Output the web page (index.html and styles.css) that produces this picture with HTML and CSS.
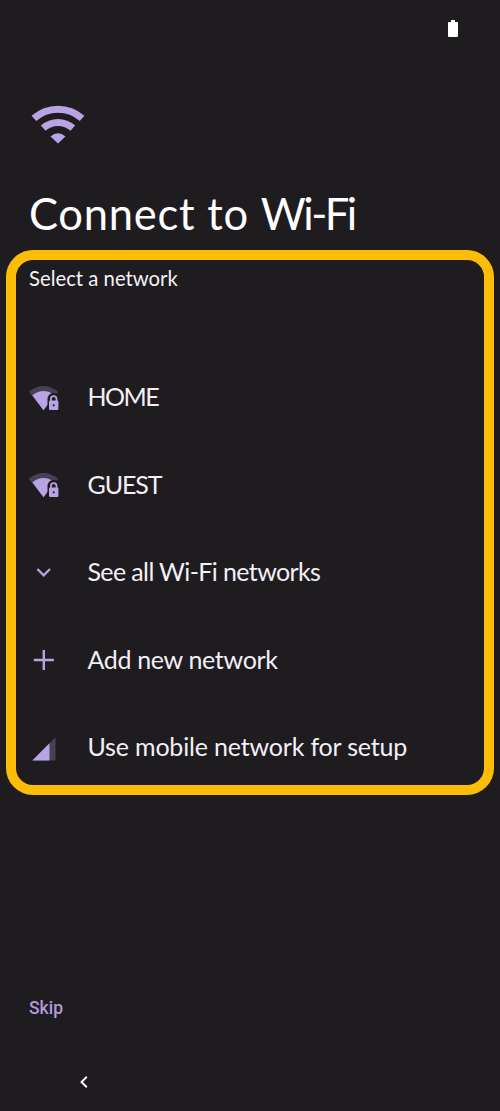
FILE: index.html
```html
<!DOCTYPE html>
<html lang="en">
<head>
<meta charset="utf-8">
<title>Connect to Wi-Fi</title>
<link rel="stylesheet" href="styles.css">
</head>
<body>
<main class="screen">
  <div class="status">
    <svg class="battery" viewBox="0 0 10 17"><path d="M3 0h4v2h2q1 0 1 1v13q0 1-1 1H1q-1 0-1-1V3q0-1 1-1h2z"/></svg>
  </div>
  <header class="header">
    <svg class="wifi" viewBox="0 0 54 40">
      <g fill="none" stroke="currentColor" stroke-width="7"><path d="M2.900 14.400a36 36 0 0 1 48.200 0"/><path d="M12.200 24.200a22 22 0 0 1 29.600 0"/></g>
      <path fill="currentColor" d="M19.500 32.400q7.500-6.400 15 0L27 39.500z"/>
    </svg>
    <h1 class="title">Connect to <span class="wide-glyphs">Wi-Fi</span></h1>
  </header>
  <section class="panel">
    <h2 class="subtitle">Select a network</h2>
    <ul class="networks">
      <li class="row">
        <svg class="icon" viewBox="0 0 32 28"><use href="#secured"/></svg>
        <span class="label home">HOME</span>
      </li>
      <li class="row">
        <svg class="icon" viewBox="0 0 32 28">
          <g id="secured">
            <path fill="#484056" d="M.8 7.800Q15.500-3.600 30.200 7.800L15.500 26.300z"/>
            <path fill="#b8a4e3" d="M4.300 11.300Q15.500 2.500 26.700 11.300L15.500 26.300z"/>
            <path fill="#1f1c20" d="M19.500 14q1.500-5 6-5t6 5v14h-12z"/>
            <rect x="21" y="16.600" width="9.400" height="9.400" rx="1.200" fill="#b8a4e3"/>
            <path d="M22.900 17v-2a2.800 2.800 0 0 1 5.600 0v2" fill="none" stroke="#b8a4e3" stroke-width="1.700"/>
            <circle cx="25.700" cy="21.300" r="1.100" fill="#1f1c20"/>
          </g>
        </svg>
        <span class="label guest">GUEST</span>
      </li>
      <li class="row">
        <svg class="icon" viewBox="0 0 32 28"><path d="M9.400 10l6.300 6.300L22 10" fill="none" stroke="currentColor" stroke-width="2.300"/></svg>
        <span class="label see">See all Wi-Fi networks</span>
      </li>
      <li class="row">
        <svg class="icon" viewBox="0 0 32 28"><path d="M5.800 14h20M15.800 4v20" fill="none" stroke="currentColor" stroke-width="2.400"/></svg>
        <span class="label add">Add new network</span>
      </li>
      <li class="row">
        <svg class="icon" viewBox="0 0 32 28"><path fill="#484056" d="M4.300 26.500L27.500 3.300v23.200z"/><path fill="#b8a4e3" d="M4.300 26.500L21.500 9.300v17.200z"/></svg>
        <span class="label mobile">Use mobile network for setup</span>
      </li>
    </ul>
  </section>
  <footer class="footer">
    <span class="skip">Skip</span>
    <svg class="back" viewBox="0 0 8 12"><path d="M6.800 .8L1.500 6l5.300 5.200" fill="none" stroke="#fff" stroke-width="1.900"/></svg>
  </footer>
</main>
</body>
</html>
```
FILE: styles.css
```css
* { box-sizing: border-box; }
body { margin: 0; background: #1f1c20; font-family: Lato, "Open Sans", sans-serif; color: #f5f2f6; }
.screen { height: 1111px; display: flex; flex-direction: column; overflow: hidden; }
.status { height: 104px; padding: 20px 42px 0 0; display: flex; justify-content: flex-end; }
.battery { width: 10px; height: 17px; fill: #fff; }
.header { height: 146px; padding-left: 31px; color: #b8a4e3; }
.wifi { display: block; width: 54px; height: 40px; }
.title { margin: 43px 0 0 -2px; font-size: 43.500px; font-weight: 400; line-height: 52px; letter-spacing: .75px; color: #fff; white-space: nowrap; }
.wide-glyphs { letter-spacing: -2.500px; }
.panel { height: 545px; margin: 0 6px; border: 10px solid #fdbc05; border-radius: 27px; padding: 6px 0 0 12px; }
.subtitle { margin: 0; padding-left: 1px; font-size: 20.300px; font-weight: 400; line-height: 24px; white-space: nowrap; }
.networks { list-style: none; margin: 0; padding: 64px 0 0; }
.row { height: 87.500px; display: flex; align-items: center; white-space: nowrap; color: #b8a4e3; }
.icon { width: 32px; height: 28px; flex: none; }
.label { margin-left: 27.500px; padding-bottom: 3px; font-size: 25px; line-height: 30px; color: #f3eff6; }
.home { letter-spacing: -1.500px; }
.guest { letter-spacing: -1.100px; }
.see { letter-spacing: -.620px; }
.add { letter-spacing: -.330px; }
.mobile { letter-spacing: -.180px; }
.footer { flex: 1; padding: 202px 29px 0; display: flex; flex-direction: column; align-items: flex-start; }
.skip { font-family: Roboto, sans-serif; font-size: 17.500px; font-weight: 500; line-height: 22px; color: #b09bda; }
.back { width: 8px; height: 12px; margin: 57px 0 0 51px; }
```
